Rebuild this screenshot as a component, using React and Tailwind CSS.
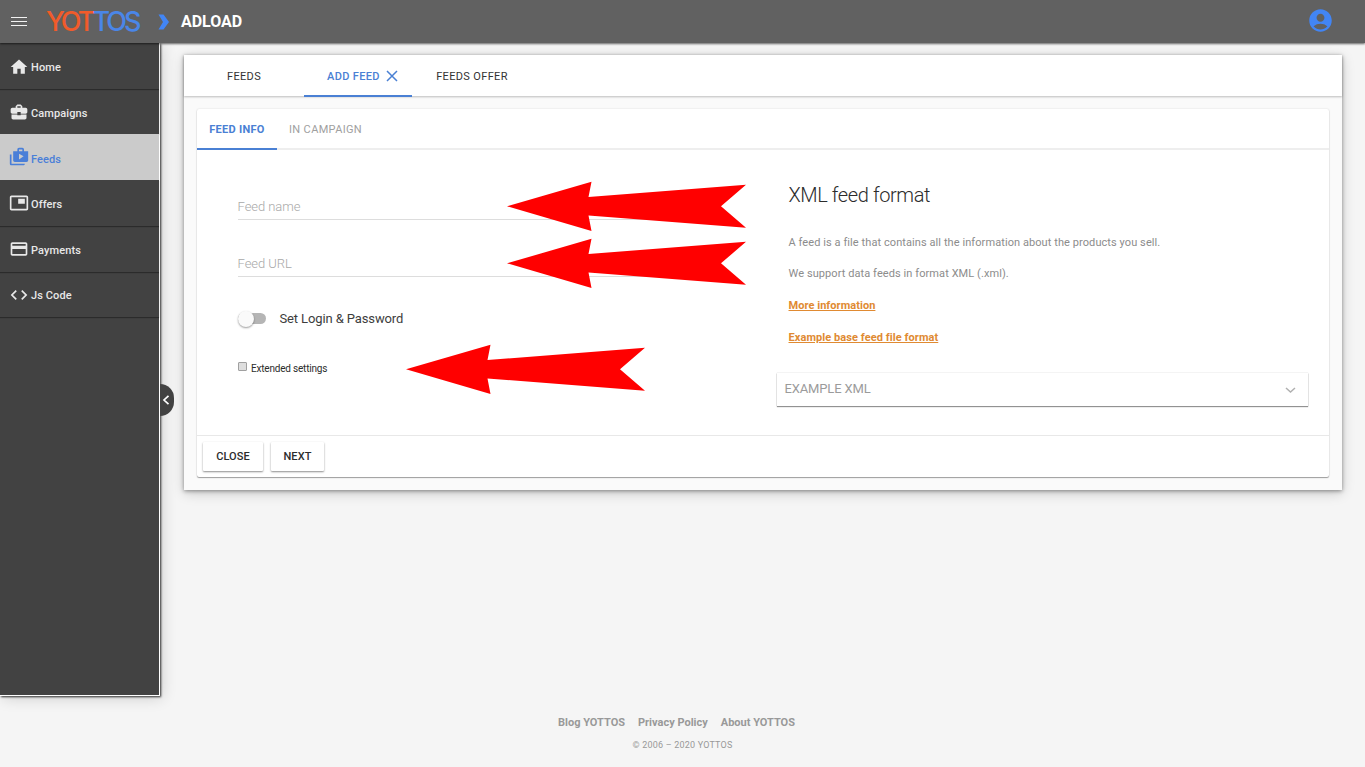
import {
  MdHome,
  MdBusinessCenter,
  MdShopTwo,
  MdPictureInPicture,
  MdPayment,
  MdCode,
  MdAccountCircle,
} from "react-icons/md";

const NAV = [
  { label: "Home", Icon: MdHome, row: "h-[46px] pt-[3px]", lift: "mb-[2px]" },
  { label: "Campaigns", Icon: MdBusinessCenter, row: "h-[45px] pt-[4px]", lift: "mb-[4px]" },
  { label: "Feeds", Icon: MdShopTwo, active: true, row: "h-[46px] pt-[6px]", lift: "mb-[6px]" },
  { label: "Offers", Icon: MdPictureInPicture, row: "h-[46px] pt-[3px]", lift: "mb-[4px]" },
  { label: "Payments", Icon: MdPayment, row: "h-[46px] pt-[3px]", lift: "mb-[4px]" },
  { label: "Js Code", Icon: MdCode, row: "h-[45px] pt-[2px]", lift: "mb-[2px]" },
];

function Header() {
  return (
    <header className="relative z-20 flex h-[43px] items-center bg-[#616161] shadow-[0_1px_2px_rgba(0,0,0,0.6)]">
      <svg className="ml-[11px] h-[11px] w-4" viewBox="0 0 16 11">
        <path d="M0 1.5h16M0 5.5h16M0 9.5h16" stroke="#f2f2f2" strokeWidth="1" />
      </svg>
      <div className="ml-[19px] flex h-[30px] w-[98px] font-['Inter',sans-serif] text-[27px] leading-[30px] font-medium tracking-[-2.95px]">
        <span className="text-[#f15b2a]">YOT</span>
        <span className="text-[#4a86e8]">TOS</span>
      </div>
      <svg className="ml-[14px] h-4 w-3" viewBox="0 0 12 16">
        <path d="M0.5 0.5H5.5L11 8 5.5 15.5H0.5L5 8Z" fill="#4285f4" />
      </svg>
      <span className="ml-[11px] pt-px text-[16px] font-bold tracking-[-0.05px] text-white">ADLOAD</span>
      <MdAccountCircle className="mr-[31px] ml-auto size-[27px] -translate-y-px text-[#4285f4]" />
    </header>
  );
}

function Sidebar() {
  return (
    <aside className="relative h-[653px] w-[160px] shrink-0 border-r border-b border-white bg-[#424242] shadow-[1px_1px_2px_rgba(0,0,0,0.8),2px_2px_14px_rgba(0,0,0,0.16)]">
      <nav>
        {NAV.map(({ label, Icon, active, row, lift }) => (
          <div
            key={label}
            className={`flex items-center pl-[9px] text-[11px] font-medium tracking-[0.1px] ${row} ${
              active
                ? "bg-[#cbcbcb] text-[#4a7fd8]"
                : "text-[#e8e8e8] shadow-[0_1px_1px_rgba(0,0,0,0.35)]"
            }`}
          >
            <Icon className={`mr-[2px] size-5 ${lift}`} />
            <span className="leading-4">{label}</span>
          </div>
        ))}
      </nav>
      <button className="absolute top-[341px] left-[160px] flex h-8 w-[14px] items-center rounded-r-full bg-[#424242] pl-[2px]">
        <svg className="h-[10px] w-2" viewBox="0 0 8 10">
          <path d="M6.5 0.8L2 5l4.5 4.2" fill="none" stroke="#fff" strokeWidth="1.7" />
        </svg>
      </button>
    </aside>
  );
}

function Arrow({ className }) {
  return (
    <svg className={`absolute h-[50px] w-[240px] ${className}`} viewBox="0 0 240 50">
      <path d="M0 25.3L84.5 0.8 81.5 16 239 3.8 214 25.3 239 46.8 81.5 34.5 84.5 50Z" fill="#ff0000" />
    </svg>
  );
}

function FeedForm() {
  return (
    <div className="relative w-[580px] pt-[48px] pl-[40.5px] text-[13px]">
      <div className="h-[22px] w-[480px] border-b border-[#dddddd] leading-[18px] font-light tracking-[-0.05px] text-[#a8a8a8]">
        Feed name
      </div>
      <div className="mt-[35px] h-[22px] w-[480px] border-b border-[#dddddd] leading-[18px] font-light tracking-[-0.05px] text-[#a8a8a8]">
        Feed URL
      </div>
      <div className="mt-[33px] flex h-[18px] items-center">
        <span className="mb-px flex h-[11px] w-7 items-center rounded-full bg-[#b5b5b5]">
          <span className="size-4 shrink-0 rounded-full bg-[#fafafa] shadow-[0_1px_2px_rgba(0,0,0,0.4)]" />
        </span>
        <span className="ml-[14px] tracking-[-0.12px] text-[#3d3d3d]">Set Login &amp; Password</span>
      </div>
      <div className="mt-[32px] flex h-4 items-center">
        <span className="mb-[3px] size-[9px] rounded-[1px] border border-[#a0a0a0] bg-[#dedede]" />
        <span className="ml-[4.5px] text-[10px] tracking-[-0.2px] text-[#2c2c2c]">Extended settings</span>
      </div>
      <Arrow className="top-[31px] left-[310px]" />
      <Arrow className="top-[88px] left-[310px]" />
      <Arrow className="top-[194px] left-[209px]" />
    </div>
  );
}

function FormatInfo() {
  return (
    <section className="w-[530.5px] pt-[32px] text-[11px]">
      <div className="pr-3 pl-[11.5px]">
        <h2 className="h-[26px] text-[20px] leading-[26px] font-light tracking-[-0.4px] text-[#2c2c2c]">
          XML feed format
        </h2>
        <p className="mt-[27px] leading-4 tracking-[0.08px] text-[#8c8c8c]">
          A feed is a file that contains all the information about the products you sell.
        </p>
        <p className="mt-[15px] leading-4 tracking-[0.08px] text-[#8c8c8c]">
          We support data feeds in format XML (.xml).
        </p>
        <p className="mt-4 leading-4 font-bold tracking-[0.05px] text-[#e08a32] underline">More information</p>
        <p className="mt-4 leading-4 font-bold tracking-[0.07px] text-[#e08a32] underline">
          Example base feed file format
        </p>
      </div>
      <div className="mt-[27px] flex h-[33px] items-center justify-between bg-white pr-3 pl-[7.5px] text-[13px] text-[#9b9b9b] shadow-[0_0_1px_rgba(0,0,0,0.25),0_1px_1px_rgba(0,0,0,0.4)]">
        <span className="pb-[2px] tracking-[-0.15px]">EXAMPLE XML</span>
        <svg className="mt-[2px] h-[7px] w-[11px]" viewBox="0 0 11 7">
          <path d="M1 1l4.5 4L10 1" fill="none" stroke="#b0b0b0" strokeWidth="1.5" />
        </svg>
      </div>
    </section>
  );
}

export default function App() {
  return (
    <div className="flex h-[767px] w-[1365px] flex-col overflow-hidden bg-[#f5f5f5] font-['Roboto',sans-serif]">
      <Header />
      <div className="flex h-[653px]">
        <Sidebar />
        <main className="mt-3 ml-6 h-[435px] w-[1158px] bg-[#fafafa] shadow-[0_1px_4px_rgba(0,0,0,0.4),0_3px_12px_rgba(0,0,0,0.18)]">
          <div className="flex h-[41px] bg-white text-[11px] leading-[44px] text-[#333333] shadow-[0_1px_2px_rgba(0,0,0,0.25)]">
            <span className="w-[120px] text-center tracking-[0.35px]">FEEDS</span>
            <span className="flex h-[42px] w-[108px] items-center border-b-2 border-[#4a80d4] pl-[23px] font-medium tracking-[0.35px] text-[#4a80d4]">
              <span className="pt-[3px]">ADD FEED</span>
              <svg className="mt-[2px] ml-[6px] size-3" viewBox="0 0 12 12">
                <path d="M1 1l10 10M11 1L1 11" stroke="#4a80d4" strokeWidth="1.5" />
              </svg>
            </span>
            <span className="w-[120px] text-center tracking-[0.35px]">FEEDS OFFER</span>
          </div>
          <div className="mt-[13px] ml-[13px] flex h-[368px] w-[1132px] flex-col rounded-[2px] bg-white shadow-[0_1px_1px_rgba(0,0,0,0.35),0_0_2px_rgba(0,0,0,0.14)]">
            <div className="flex h-[41px] border-b-2 border-[#eeeeee] text-[11px] leading-[42px]">
              <span className="h-[41px] w-[80px] border-b-2 border-[#4a80d4] text-center font-bold tracking-[0.28px] text-[#4a80d4]">
                FEED INFO
              </span>
              <span className="ml-3 tracking-[0.35px] text-[#a0a0a0]">IN CAMPAIGN</span>
            </div>
            <div className="flex h-[285px]">
              <FeedForm />
              <FormatInfo />
            </div>
            <div className="flex h-[42px] gap-2 border-t border-[#e8e8e8] pt-[6px] pl-[6px] text-[11px] font-medium tracking-[0.1px] text-[#2c2c2c]">
              <button className="h-[29px] w-[60px] rounded-[1px] bg-white pt-[2px] shadow-[0_1px_2px_rgba(0,0,0,0.45)]">CLOSE</button>
              <button className="h-[29px] w-[53px] rounded-[1px] bg-white pt-[2px] shadow-[0_1px_2px_rgba(0,0,0,0.45)]">NEXT</button>
            </div>
          </div>
        </main>
      </div>
      <footer className="pt-[19px] text-center text-[#999999]">
        <div className="flex justify-center gap-[13px] pr-[12px] text-[11px] leading-4 font-bold">
          <span>Blog YOTTOS</span>
          <span>Privacy Policy</span>
          <span>About YOTTOS</span>
        </div>
        <p className="mt-[6px] text-[9px] leading-4 tracking-[0.2px]">© 2006 – 2020 YOTTOS</p>
      </footer>
    </div>
  );
}
